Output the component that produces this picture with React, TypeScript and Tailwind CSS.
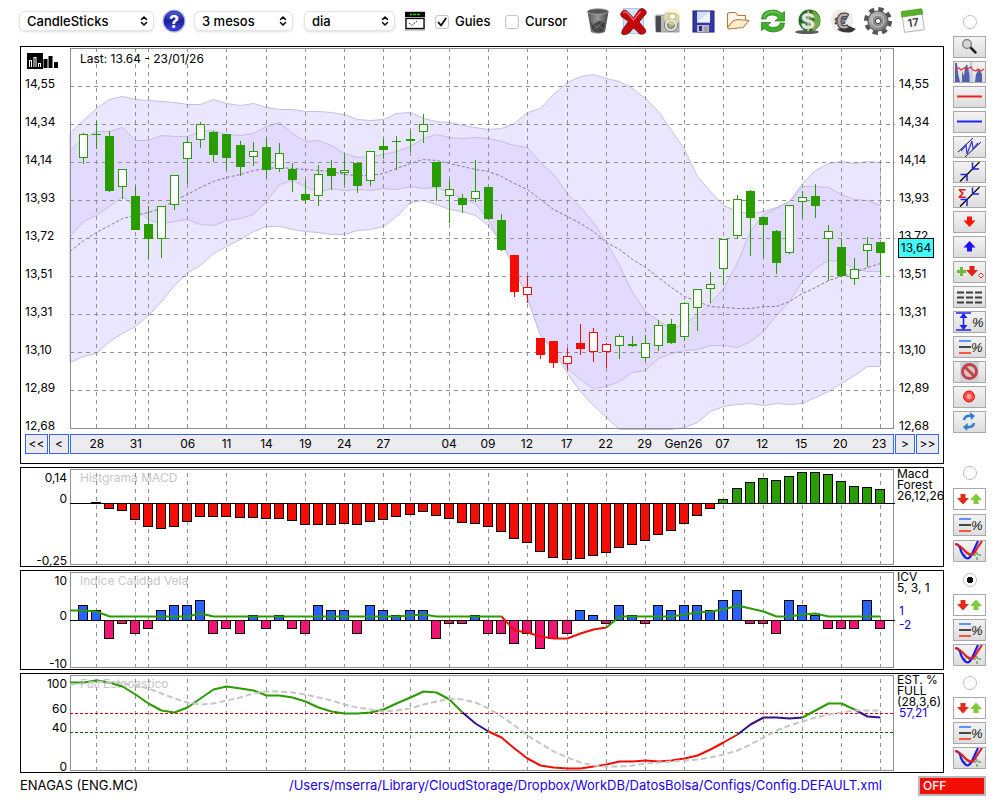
import { useState } from 'react'
import type { ReactNode } from 'react'
import { ChevronsUpDown } from 'lucide-react'

// [high, open/close top, open/close bottom, low, kind]
// u = hollow green, d = solid green, U = hollow red, D = solid red
type Candle = [number, number, number, number, 'u' | 'd' | 'U' | 'D']

const candles: Candle[] = [
  [133, 134, 157, 164, 'u'], [121, 134, 135, 149, 'd'], [131, 136, 191, 192, 'd'], [169, 169, 186, 199, 'u'],
  [186, 196, 230, 230, 'd'], [206, 224, 239, 259, 'd'], [206, 206, 238, 258, 'u'], [175, 175, 204, 210, 'u'],
  [137, 142, 158, 184, 'u'], [122, 124, 139, 148, 'u'], [131, 132, 155, 162, 'd'], [134, 134, 158, 170, 'd'],
  [141, 145, 167, 176, 'd'], [142, 151, 156, 166, 'u'], [138, 147, 170, 178, 'd'], [143, 153, 168, 172, 'u'],
  [163, 169, 180, 192, 'd'], [180, 194, 200, 204, 'd'], [165, 174, 195, 206, 'u'], [160, 168, 176, 190, 'd'],
  [154, 170, 172, 185, 'u'], [162, 163, 186, 193, 'd'], [151, 151, 180, 186, 'u'], [139, 146, 150, 159, 'd'],
  [136, 141, 142, 170, 'd'], [131, 139, 141, 152, 'd'], [114, 124, 131, 143, 'u'], [162, 162, 187, 201, 'd'],
  [180, 189, 195, 223, 'u'], [194, 198, 205, 213, 'd'], [160, 191, 198, 202, 'u'], [187, 187, 219, 220, 'd'],
  [214, 220, 250, 251, 'd'], [255, 255, 292, 297, 'D'], [276, 287, 294, 303, 'U'], [338, 338, 355, 359, 'D'],
  [341, 341, 363, 368, 'D'], [348, 356, 363, 370, 'U'], [324, 343, 349, 355, 'D'], [328, 332, 351, 362, 'U'],
  [343, 344, 351, 368, 'U'], [334, 336, 345, 359, 'u'], [336, 344, 346, 347, 'd'], [335, 343, 357, 361, 'u'],
  [320, 325, 345, 351, 'u'], [319, 324, 343, 344, 'd'], [302, 303, 336, 341, 'u'], [289, 289, 307, 331, 'u'],
  [272, 284, 288, 303, 'u'], [239, 239, 268, 285, 'u'], [195, 199, 235, 239, 'u'], [190, 191, 218, 256, 'd'],
  [217, 217, 225, 258, 'd'], [230, 231, 263, 274, 'd'], [205, 205, 252, 254, 'u'], [191, 197, 201, 218, 'u'],
  [184, 196, 206, 218, 'd'], [225, 231, 238, 281, 'u'], [239, 247, 276, 277, 'd'], [258, 269, 278, 285, 'u'],
  [237, 244, 250, 267, 'u'], [242, 242, 253, 275, 'd'],
]

// every curve starts at the left border and then has one value per session
const outerTop = [
  133, 120, 108, 99, 96, 99, 100, 101, 102, 104, 104, 99, 103, 105, 103, 107, 109, 109, 111, 111, 112, 114, 119, 120,
  119, 113, 112, 118, 121, 122, 125, 127, 129, 128, 123, 112, 108, 94, 82, 76, 74, 78, 81, 88, 98, 111, 130, 149, 176,
  191, 205, 211, 213, 211, 207, 201, 183, 170, 163, 161, 163, 161, 162,
]
const outerBottom = [
  362, 356, 353, 341, 333, 326, 315, 301, 285, 272, 265, 253, 246, 239, 231, 226, 226, 229, 231, 232, 234, 234, 230,
  229, 226, 216, 202, 200, 204, 209, 211, 215, 225, 242, 268, 298, 335, 350, 373, 391, 405, 417, 429, 429, 429, 429,
  429, 427, 422, 411, 406, 404, 403, 405, 403, 404, 403, 397, 391, 383, 375, 366, 366,
]
const innerTop = [
  150, 138, 131, 131, 127, 140, 140, 135, 136, 136, 131, 130, 134, 135, 133, 126, 122, 133, 141, 140, 145, 153, 157,
  156, 154, 151, 146, 138, 134, 137, 138, 137, 138, 141, 145, 147, 162, 174, 193, 207, 222, 242, 265, 292, 311, 320,
  329, 323, 315, 303, 288, 262, 231, 214, 208, 201, 186, 186, 187, 194, 199, 200, 205,
]
const innerBottom = [
  236, 221, 215, 206, 196, 207, 219, 223, 221, 219, 224, 225, 220, 218, 214, 201, 184, 180, 186, 192, 188, 190, 189,
  190, 188, 189, 186, 188, 187, 192, 198, 203, 220, 242, 268, 298, 335, 348, 368, 379, 388, 386, 381, 372, 370, 358,
  353, 350, 349, 345, 345, 347, 341, 331, 315, 301, 281, 268, 260, 261, 268, 271, 271,
]
const average = [
  251, 240, 232, 225, 218, 215, 212, 208, 200, 194, 187, 181, 177, 174, 170, 168, 167, 168, 169, 170, 171, 174, 175,
  175, 173, 168, 163, 159, 160, 163, 166, 169, 171, 176, 183, 189, 199, 209, 216, 223, 231, 242, 249, 259, 267, 277,
  287, 296, 301, 306, 307, 308, 308, 306, 306, 301, 293, 287, 280, 276, 272, 267, 263,
]

const macd = [
  0, 1, -5, -7, -16, -23, -25, -23, -18, -13, -13, -13, -14, -14, -15, -15, -17, -21, -21, -21, -20, -21, -18, -16, -13,
  -11, -8, -12, -15, -19, -20, -23, -28, -35, -39, -48, -54, -56, -55, -52, -49, -44, -41, -37, -31, -27, -20, -12, -5,
  4, 15, 21, 25, 23, 27, 31, 31, 29, 22, 17, 16, 14,
]

const icv = [
  3, 2, -4, -1, -3, -2, 2, 3, 3, 4, -3, -2, -3, 1, -2, 1, -2, -3, 3, 2, 2, -3, 3, 2, 1, 2, 2, -4, -1, -1, 1, -3, -3, -5,
  -3, -6, -4, -3, 2, 1, -1, 3, 1, -1, 3, 2, 3, 3, 2, 4, 6, -1, -1, -3, 4, 3, 1, -2, -2, -2, 4, -2,
]
const icvLine = [
  610, 610, 611, 616, 616, 616, 616, 616, 616, 616, 613, 616, 616, 616, 616, 616, 616, 616, 616, 616, 616, 616, 616,
  616, 616, 616, 615, 614, 616, 616, 616, 616, 616, 616, 630, 632, 636, 638, 638, 633, 629, 627, 616, 616, 616, 616,
  616, 614, 612, 611, 609, 605, 608, 611, 616, 616, 614, 613, 616, 616, 616, 616, 616,
]

const stoch = [
  682, 682, 680, 682, 686, 694, 703, 710, 712, 707, 698, 689, 686, 688, 690, 695, 695, 697, 701, 707, 711, 713, 713,
  712, 709, 703, 697, 691, 692, 699, 712, 723, 731, 737, 748, 758, 765, 767, 768, 768, 766, 764, 761, 761, 760, 761,
  760, 758, 755, 749, 742, 734, 724, 717, 717, 718, 717, 710, 703, 703, 709, 716, 717,
]
const stochSignal = [
  684, 683, 681, 682, 683, 685, 688, 693, 698, 702, 704, 703, 700, 697, 693, 691, 691, 692, 694, 697, 700, 704, 707,
  709, 711, 710, 708, 704, 701, 698, 699, 702, 708, 716, 725, 735, 743, 751, 757, 762, 765, 766, 766, 765, 763, 762,
  761, 760, 759, 757, 754, 750, 744, 737, 730, 725, 721, 717, 714, 712, 710, 710, 710,
]

const ticks: [number, string][] = [
  [1, '28'], [4, '31'], [5, ''], [8, '06'], [11, '11'], [14, '14'], [17, '19'], [20, '24'], [23, '27'], [25, ''],
  [28, '04'], [31, '09'], [34, '12'], [37, '17'], [40, '22'], [43, '29'], [46, 'Gen26'], [49, '07'], [52, '12'],
  [55, '15'], [58, '20'], [61, '23'],
]

const prices = ['14,55', '14,34', '14,14', '13,93', '13,72', '13,51', '13,31', '13,10', '12,89', '12,68']

const LEFT = 70
const WIDTH = 824
const GREEN = '#299c00'
const RED = '#f20d05'
const NAVY = '#34128a'

const sessionX = (i: number) => Math.floor(83.045 + 13.08 * i)
const curveX = (k: number) => (k === 0 ? LEFT : sessionX(k - 1) + 0.5)
const points = (values: number[], from = 0, to = values.length - 1) =>
  values.slice(from, to + 1).map((y, n) => `${curveX(from + n)},${y + 0.5}`)
const band = (top: number[], bottom: number[]) => [...points(top), ...points(bottom).reverse()].join(' ')

function Grid({ top, bottom }: { top: number; bottom: number }) {
  return (
    <g stroke="#929292" strokeDasharray="4 4">
      {ticks.map(([i]) => (
        <line key={i} x1={sessionX(i) + 0.5} x2={sessionX(i) + 0.5} y1={top} y2={bottom} />
      ))}
    </g>
  )
}

function Plot({ top, height, className, label, children }: { top: number; height: number; className: string; label: string; children: ReactNode }) {
  return (
    <svg
      role="img"
      aria-label={label}
      viewBox={`${LEFT} ${top} ${WIDTH} ${height}`}
      preserveAspectRatio="none"
      className={`block w-full overflow-visible ${className}`}
    >
      {children}
    </svg>
  )
}

function PriceChart() {
  return (
    <Plot top={47} height={387} className="h-[387px]" label="ENAGAS candlesticks">
      <polygon points={band(outerTop, outerBottom)} fill="#ebe6ff" stroke="#c5bee3" />
      <polygon points={band(innerTop, innerBottom)} fill="#e3daff" />
      <polyline points={points(innerTop).join(' ')} fill="none" stroke="#c5bee3" />
      <polyline points={points(innerBottom).join(' ')} fill="none" stroke="#c5bee3" />
      <polyline points={points(average).join(' ')} fill="none" stroke="#84799f" strokeDasharray="3 2" />
      <g stroke="#929292" strokeDasharray="4 4">
        {prices.slice(0, 9).map((p, n) => (
          <line key={p} x1={70} x2={895} y1={86.5 + n * 38} y2={86.5 + n * 38} />
        ))}
      </g>
      <Grid top={48} bottom={430} />
      <rect x={70.5} y={48.5} width={823} height={380} fill="none" stroke="#8e8e8e" />
      {candles.map(([high, top, bottom, low, kind], i) => {
        const x = sessionX(i)
        const color = kind === 'u' || kind === 'd' ? GREEN : RED
        const hollow = kind === 'u' || kind === 'U'
        return (
          <g key={i}>
            <rect x={x} y={high} width={1} height={low - high} fill={color} />
            {hollow ? (
              <rect x={x - 3.5} y={top + 0.5} width={8} height={bottom - top} fill="#fff" stroke={color} />
            ) : (
              <rect x={x - 4} y={top} width={9} height={bottom - top} fill={color} />
            )}
          </g>
        )
      })}
    </Plot>
  )
}

function MacdChart() {
  return (
    <Plot top={468} height={98} className="h-[98px]" label="Histgrama MACD">
      <rect x={70.5} y={469.5} width={823} height={95} fill="none" stroke="#8e8e8e" />
      <Grid top={473} bottom={566} />
      {macd.map((v, i) =>
        v === 0 ? null : (
          <rect
            key={i}
            x={sessionX(i) - 4.5}
            y={v > 0 ? 503.5 - v : 503.5}
            width={9}
            height={Math.abs(v)}
            fill={v > 0 ? GREEN : RED}
            stroke="#000"
          />
        ),
      )}
      <rect x={70} y={503} width={825} height={1} />
    </Plot>
  )
}

function IcvChart() {
  return (
    <Plot top={571} height={98} className="h-[98px]" label="Indice Calidad Vela">
      <rect x={70.5} y={572.5} width={823} height={95} fill="none" stroke="#8e8e8e" />
      <Grid top={576} bottom={669} />
      {icv.map((v, i) => (
        <rect
          key={i}
          x={sessionX(i) - 4.5}
          y={v > 0 ? 620.5 - v * 5 : 620.5}
          width={9}
          height={v > 0 ? v * 5 : -v * 5 - 2}
          fill={v > 0 ? '#2962ff' : '#f01475'}
          stroke="#000"
        />
      ))}
      <rect x={70} y={620} width={825} height={1} />
      <g fill="none" strokeWidth={2} strokeLinejoin="round">
        <polyline points={points(icvLine, 0, 33).join(' ')} stroke={GREEN} />
        <polyline points={points(icvLine, 33, 41).join(' ')} stroke={RED} />
        <polyline points={points(icvLine, 41).join(' ')} stroke={GREEN} />
      </g>
    </Plot>
  )
}

function StochChart() {
  return (
    <Plot top={674} height={98} className="h-[98px]" label="Full Estocastico">
      <rect x={70.5} y={675.5} width={823} height={95} fill="none" stroke="#8e8e8e" />
      <Grid top={679} bottom={772} />
      <line x1={70} x2={895} y1={713.5} y2={713.5} stroke="#d80000" strokeDasharray="3 2" />
      <line x1={70} x2={895} y1={732.5} y2={732.5} stroke="#006400" strokeDasharray="3 2" />
      <g fill="none" strokeWidth={2} strokeLinejoin="round">
        <polyline points={points(stoch, 0, 30).join(' ')} stroke={GREEN} />
        <polyline points={points(stoch, 30, 32).join(' ')} stroke={NAVY} />
        <polyline points={points(stoch, 32, 51).join(' ')} stroke={RED} />
        <polyline points={points(stoch, 51, 56).join(' ')} stroke={NAVY} />
        <polyline points={points(stoch, 56, 60).join(' ')} stroke={GREEN} />
        <polyline points={points(stoch, 60).join(' ')} stroke={NAVY} />
        <polyline points={points(stochSignal).join(' ')} stroke="#c6c6c6" strokeDasharray="6 3" />
      </g>
    </Plot>
  )
}

function Indicator({ title, axis, legend, children }: { title: string; axis: ReactNode; legend: ReactNode; children: ReactNode }) {
  return (
    <section className="flex h-[100px] border border-black">
      <div className="w-[49px] shrink-0 pt-0.5 pr-[3px] text-right leading-4">{axis}</div>
      <div className="relative min-w-0 flex-1">
        <h2 className="absolute top-0.5 left-2.5 leading-4 text-[#c6c6c6]">{title}</h2>
        <div className="relative">{children}</div>
      </div>
      <div className="w-[49px] shrink-0 overflow-hidden pl-[3px] leading-[11px] whitespace-nowrap">{legend}</div>
    </section>
  )
}

function Picker({ label, options, className }: { label: string; options: string[]; className: string }) {
  return (
    <div className={`relative shrink-0 ${className}`}>
      <select
        aria-label={label}
        className="h-5 w-full appearance-none rounded-md border border-[#e3e3e3] bg-white pl-[7px] text-[13px] leading-4 font-medium shadow-sm"
      >
        {options.map((o) => (
          <option key={o}>{o}</option>
        ))}
      </select>
      <ChevronsUpDown className="pointer-events-none absolute top-1 right-1 size-3" strokeWidth={3} />
    </div>
  )
}

function Tick({ label, on, className }: { label: string; on: boolean; className: string }) {
  const [checked, setChecked] = useState(on)
  return (
    <label className={`flex shrink-0 items-center gap-1.5 pt-0.5 text-[13px] font-medium ${className}`}>
      <span className="relative flex">
        <input
          type="checkbox"
          checked={checked}
          onChange={(e) => setChecked(e.target.checked)}
          className="size-3.5 appearance-none rounded-[3px] border border-[#c4c4c4] bg-white"
        />
        {checked && (
          <svg viewBox="0 0 14 14" className="pointer-events-none absolute inset-0 size-3.5">
            <path d="M3.500 7.500 6 10.500 10.800 3.500" fill="none" stroke="#111" strokeWidth="1.900" strokeLinecap="round" strokeLinejoin="round" />
          </svg>
        )}
      </span>
      {label}
    </label>
  )
}

const toolbarIcons: { name: string; art: ReactNode }[] = [
  {
    name: 'Paperera',
    art: (
      <>
        <path d="M3.500 4.500 7 25q7 3.500 14 0L24.500 4.500z" fill="url(#bin)" />
        <path d="M6 14 9 24q5 3 10 .5l2-8q-5-5-9-1t-6-1.500z" fill="#222" opacity=".65" />
        <path d="M8 17l5 3 6-5M10 22l5-3 4 3" fill="none" stroke="#777" strokeWidth=".8" />
        <ellipse cx="14" cy="4.500" rx="10.500" ry="2.800" fill="#555" stroke="#aaa" strokeWidth=".8" />
      </>
    ),
  },
  {
    name: 'Esborrar',
    art: (
      <>
        <rect x="4.500" y="1.500" width="20" height="25" fill="#cfe2fb" stroke="#a9c8f0" />
        <path d="M2 6q3-5 7-1l5.500 6L20 3q3-3 6 0t-1 6l-5 6 6 7q2 4-2 5t-5-2l-4.500-4L10 26q-4 3-7 1-1-2 1-5l5.500-7.500L3 10q-2-2-1-4z" fill="#c4090c" stroke="#7d0305" strokeWidth=".8" />
        <path d="M4.500 6q2-2.500 4.500.5l5.500 6.500L21.500 4.500" fill="none" stroke="#ef6a66" strokeWidth="1.400" />
      </>
    ),
  },
  {
    name: 'Captura',
    art: (
      <>
        <path d="M1 10q0-2 3-2h6l2-2h8q2 0 3 2 2 0 2 2v15H2z" fill="#b9b9b9" stroke="#8c8c8c" strokeWidth=".8" />
        <rect x="2" y="9" width="5" height="16" rx="1" fill="#4a4a4a" />
        <circle cx="17" cy="18" r="6.500" fill="#e7e7dc" stroke="#777" />
        <circle cx="17" cy="18" r="3.500" fill="#a9ab8e" stroke="#666" />
        <rect x="15" y="7" width="7" height="5" fill="#eee" stroke="#555" strokeWidth=".8" />
        <circle cx="18.500" cy="9.500" r="8.500" fill="#fbf6ae" opacity=".55" />
        <path d="M18.500 7v5M16 9.500h5" stroke="#fff" strokeWidth="1.500" />
      </>
    ),
  },
  {
    name: 'Desar',
    art: (
      <>
        <rect x="4" y="4" width="21" height="21" fill="#3537a8" stroke="#191c78" />
        <rect x="8" y="4.500" width="13" height="11" fill="#cfe0fa" />
        <path d="M8 15.500 21 4.500v11z" fill="#fff" opacity=".65" />
        <rect x="8" y="18" width="12" height="7" fill="#bcbcc6" />
        <rect x="10" y="19" width="3" height="5" fill="#2b2d92" />
        <path d="M16 19v6M18 19v6" stroke="#888" />
      </>
    ),
  },
  {
    name: 'Obrir',
    art: (
      <g fill="#fffaf0" stroke="#b07b3a" strokeWidth="1.100" strokeLinejoin="round">
        <path d="M3.500 20.500v-14l3-1h5l2.500 3h7.500v5" />
        <path d="M3.500 20.500 9.500 13.500l4-1 11.500 1L19 20.500 4.500 22z" fill="#ffeccb" />
      </g>
    ),
  },
  {
    name: 'Actualitzar',
    art: (
      <g fill="#3fae2c" stroke="#1f7d17" strokeWidth=".7" strokeLinejoin="round">
        <path d="M2.500 12q0-8.500 11.500-9 6 .2 8.500 3.500l3-2V14h-9.500l3.500-3q-2-3-6-3-6 .3-6.500 4z" />
        <path d="M25.500 16q0 8.500-11.500 9-6-.2-8.500-3.500l-3 2V15.500H12L8.500 18q2 2.500 6 2.500 6-.5 6.500-4.500z" />
        <path d="M5 10q2-5 9-5.300 5 0 7.500 3.300" fill="none" stroke="#a4e68f" />
      </g>
    ),
  },
  {
    name: 'Dolar',
    art: (
      <>
        <ellipse cx="13" cy="25" rx="12" ry="2" fill="#333" opacity=".8" />
        <circle cx="15.500" cy="13.500" r="11" fill="#2a6b18" />
        <path d="M18 3q9 4 8 13-2 7-8 8 5-10 0-21z" fill="#6cae4b" />
        <text x="14" y="22" fontSize="22" fontWeight="800" textAnchor="middle" fill="#e4e8df" stroke="#a5b09e" strokeWidth=".6">$</text>
      </>
    ),
  },
  {
    name: 'Euro',
    art: (
      <>
        <circle cx="13" cy="14" r="11.500" fill="#efecec" />
        <path d="M8 22q6 5 15 3l4-3-7-3z" fill="#3d3535" />
        <text x="13" y="22" fontSize="22" fontWeight="800" textAnchor="middle" fill="#b4aeb0" stroke="#3d383a" strokeWidth="1">€</text>
      </>
    ),
  },
  {
    name: 'Configuracio',
    art: (
      <>
        <circle cx="14" cy="14" r="11.500" fill="none" stroke="#545454" strokeWidth="5" strokeDasharray="5.030 4" />
        <circle cx="14" cy="14" r="10" fill="url(#steel)" stroke="#5c5c5c" strokeWidth="1.200" />
        <circle cx="14" cy="14" r="6" fill="#8b8b8b" stroke="#d0d0d0" />
        <circle cx="14" cy="14" r="2.600" fill="#fff" stroke="#444" />
      </>
    ),
  },
  {
    name: 'Calendari',
    art: (
      <g transform="rotate(-8 14 14)">
        <rect x="4" y="4" width="20" height="20" rx="1" fill="#fafafa" stroke="#b3b3b3" />
        <path d="M3.500 8.500V4q0-1 1-1h19q1 0 1 1v4.500z" fill="#55b32b" stroke="#3f8f1d" strokeWidth=".6" />
        <text x="14" y="19.500" fontSize="11" fontWeight="600" textAnchor="middle" fill="#3a3a3a">17</text>
      </g>
    ),
  },
]

function Percent({ x }: { x: number }) {
  return (
    <text x={x} y="16" fontSize="13" fill="#111" className="font-['Liberation_Sans',sans-serif] italic">
      %
    </text>
  )
}

const downArrow = 'M-2.500 -5h5v4h3.500L0 5.500-6 -1h3.500z'
const upArrow = 'M-2.500 5h5v-4h3.500L0 -5.500-6 1h3.500z'

const linesPercent = (
  <>
    <path d="M6 5h12" stroke="#3070ff" strokeWidth="1.500" />
    <path d="M6 11h12" stroke="#111" strokeWidth="1.500" />
    <path d="M6 17h12" stroke="#ff5340" strokeWidth="2" />
    <Percent x={18} />
  </>
)

const arrowPair = (
  <>
    <path transform="translate(10 11)" d={downArrow} fill="#e02b1d" />
    <path transform="translate(23 11)" d={upArrow} fill="#80c93c" />
  </>
)

const crossing = (
  <>
    <path d="M10 15h20M24 12v9" stroke="#2f8a2f" strokeDasharray="3 2" />
    <path d="M3 4q4 1 5 7 6 13 11 3L25 1" fill="none" stroke="#1c1cf0" strokeWidth="2.200" />
    <path d="M2 4q5 1 9 6 8 9 12 0L29 1" fill="none" stroke="#e02020" strokeWidth="2.200" />
  </>
)

const trend = (
  <>
    <path d="M7 20.500 26.500 1" stroke="#000" strokeWidth="1.200" />
    <path d="M7.500 13.500H14V20M26 8h-6.500V1.500" fill="none" stroke="#2222e0" strokeWidth="1.500" />
  </>
)

const sideTools: { name: string; art: ReactNode }[] = [
  {
    name: 'Zoom',
    art: (
      <>
        <path d="m17.500 11.500 5 5" stroke="#222" strokeWidth="2.500" strokeLinecap="round" />
        <circle cx="14" cy="8" r="4.300" fill="#d8d8d8" stroke="#777" strokeWidth="1.300" />
      </>
    ),
  },
  {
    name: 'Volum',
    art: (
      <>
        <path d="M2 21V2h2l1 10 2 9h2V10l2 5 1-9 2-3 3 12 2 6h3l1-8 3-5 3 5v8z" fill="#5560a8" />
        <path d="M18 1v20" stroke="#c9cdeb" strokeWidth="3" />
        <path d="M2 8l4-1 2 2 3-2 3 1 4-2 2 3 3 1 2-2 3 2 3-2" fill="none" stroke="#e03030" strokeWidth="1.200" />
      </>
    ),
  },
  { name: 'Linia vermella', art: <path d="M4 10.500h25" stroke="#e8262a" strokeWidth="2" /> },
  { name: 'Linia blava', art: <path d="M4 10.500h25" stroke="#2020ff" strokeWidth="2" /> },
  {
    name: 'Canal',
    art: (
      <>
        <path d="M5 16 20 2M12 21 28 6" stroke="#222" />
        <path d="m8 15 5-6 1 9 5-13 1 8 5-6" fill="none" stroke="#3535e8" strokeWidth="1.200" />
      </>
    ),
  },
  { name: 'Tendencia', art: trend },
  {
    name: 'Tendencia sumatori',
    art: (
      <>
        {trend}
        <text x="5" y="12" fontSize="12" fontWeight="700" fill="#e02020">Σ</text>
      </>
    ),
  },
  { name: 'Baixa', art: <path transform="translate(16.500 10.500)" d={downArrow} fill="#fa1408" /> },
  { name: 'Puja', art: <path transform="translate(16.500 10.500)" d={upArrow} fill="#1c10fa" /> },
  {
    name: 'Afegir senyal',
    art: (
      <>
        <path d="M8.500 6v9M4 10.500h9" stroke="#6cba3a" strokeWidth="3" />
        <path transform="translate(19 10)" d={downArrow} fill="#dd2518" />
        <path d="m28 12 2.500 2.500L28 17l-2.500-2.500z" fill="#fff" stroke="#e02020" />
      </>
    ),
  },
  { name: 'Linies', art: <path d="M4 6.500h25M4 11.500h25M4 16.500h25" stroke="#3c3c3c" strokeWidth="2" strokeDasharray="7 2" /> },
  {
    name: 'Distancia percentual',
    art: (
      <>
        <path d="M3 2h15M3 19h15M10.500 3v15" stroke="#1f1ff0" strokeWidth="1.500" />
        <path d="m10.500 2 4 5h-8zM10.500 19l4-5h-8z" fill="#1f1ff0" />
        <Percent x={19} />
      </>
    ),
  },
  { name: 'Nivells percentuals', art: linesPercent },
  {
    name: 'Desactivar',
    art: (
      <>
        <rect x="7" y="1" width="19" height="20" fill="#cfd3e0" />
        <circle cx="16.500" cy="10.500" r="7" fill="#d9c5cb" stroke="#c04545" strokeWidth="3" />
        <path d="m12 6 9 9" stroke="#c04545" strokeWidth="3" />
      </>
    ),
  },
  {
    name: 'Gravar',
    art: (
      <>
        <circle cx="16" cy="10.500" r="5.500" fill="#ff4747" stroke="#e01212" />
        <circle cx="16" cy="10.500" r="2.500" fill="#ffa3a3" />
      </>
    ),
  },
  {
    name: 'Recarregar',
    art: (
      <g fill="none" stroke="#2f7fd0" strokeWidth="2.500">
        <path d="M11 9q1-5 8-4M21 12q-1 5-8 4" />
        <path d="m17 1 5 4-4 4zM15 12l-5 4 4 4z" fill="#2f7fd0" stroke="none" />
      </g>
    ),
  },
]

const panelTools = [
  { name: 'Ordre', art: arrowPair, white: true },
  { name: 'Nivells', art: linesPercent, white: false },
  { name: 'Creuament', art: crossing, white: false },
]

function ToolButton({ name, art, white }: { name: string; art: ReactNode; white?: boolean }) {
  return (
    <button
      type="button"
      aria-label={name}
      className={`block h-[22px] w-[33px] shrink-0 border border-[#a8a8a8] ${white ? 'bg-white' : 'bg-linear-to-b from-[#f3f3f3] to-[#dddddd]'}`}
    >
      <svg viewBox="1 1 31 20" className="block h-5 w-[31px]">{art}</svg>
    </button>
  )
}

function PanelRadio({ label, checked }: { label: string; checked?: boolean }) {
  return (
    <input
      type="radio"
      name="panel"
      aria-label={label}
      defaultChecked={checked}
      className="block size-3.5 shrink-0 appearance-none rounded-full border border-[#bdbdbd] bg-white bg-[radial-gradient(circle,#111_3px,transparent_3px)] bg-size-[0_0] bg-center bg-no-repeat checked:bg-size-[100%_100%]"
    />
  )
}

function PanelTools({ label, checked, className }: { label: string; checked?: boolean; className: string }) {
  return (
    <div className={`flex flex-col items-center ${className}`}>
      <div className="pb-1">
        <PanelRadio label={label} checked={checked} />
      </div>
      {panelTools.map((t) => (
        <ToolButton key={t.name} {...t} />
      ))}
    </div>
  )
}

const navButton = 'h-5 shrink-0 border border-[#3366ff] bg-[#ebebf0] text-center leading-4'

export default function App() {
  return (
    <main className="bg-white font-['Inter','Liberation_Sans',sans-serif] text-xs text-black">
      <div className="flex">
        <div className="min-w-0 flex-1">
          <header className="mb-1 flex h-[42px] items-center pl-[19px]">
            <Picker label="Tipus" options={['CandleSticks', 'Linies', 'Barres']} className="w-[135px]" />
            <button type="button" aria-label="Ajuda" className="mx-2 shrink-0">
              <svg viewBox="0 0 24 24" className="size-6">
                <circle cx="12" cy="12" r="11.500" fill="#a9aff0" />
                <circle cx="12" cy="12" r="9.800" fill="url(#help)" stroke="#2026a0" />
                <text x="12" y="18.500" fontSize="18" fontWeight="700" textAnchor="middle" fill="#fff">?</text>
              </svg>
            </button>
            <Picker label="Periode" options={['3 mesos', '6 mesos', '1 any']} className="w-[99px]" />
            <Picker label="Interval" options={['dia', 'setmana', 'mes']} className="ml-[11px] w-[91px]" />
            <button type="button" aria-label="Plantilla" className="mx-2.5 shrink-0">
              <svg viewBox="0 0 20 20" className="size-5">
                <rect width="20" height="20" fill="#c9c9c9" />
                <rect y="1" width="20" height="5" />
                <path d="M5 3.500h2m1 0h3m1 0h3" stroke="#2fd012" strokeWidth="1.500" />
                <rect x="1" y="7.500" width="18" height="10" fill="#fff" stroke="#000" strokeWidth="1.300" />
                <path d="m4 12 2.500 2.500L12 10" fill="none" stroke="#2424f0" strokeDasharray="2 1" />
              </svg>
            </button>
            <Tick label="Guies" on className="w-[70px]" />
            <Tick label="Cursor" on={false} className="mr-[9px] w-[70px]" />
            <div className="flex gap-[7px]">
              {toolbarIcons.map((icon) => (
                <button key={icon.name} type="button" aria-label={icon.name} className="size-7 shrink-0">
                  <svg viewBox="0 0 28 28" className="size-7">
                    <defs>
                      <linearGradient id="bin">
                        <stop offset="0" stopColor="#555" />
                        <stop offset=".5" stopColor="#999" />
                        <stop offset="1" stopColor="#444" />
                      </linearGradient>
                      <linearGradient id="steel" x2="1" y2="1">
                        <stop offset="0" stopColor="#c9c9c9" />
                        <stop offset="1" stopColor="#6a6a6a" />
                      </linearGradient>
                      <linearGradient id="help" x2="0" y2="1">
                        <stop offset="0" stopColor="#5561d8" />
                        <stop offset=".5" stopColor="#1d1f95" />
                        <stop offset="1" stopColor="#3b46ef" />
                      </linearGradient>
                    </defs>
                    {icon.art}
                  </svg>
                </button>
              ))}
            </div>
          </header>

          <div className="flex flex-col gap-[3px] pl-5">
            <section className="border border-black pb-[9px]">
              <div className="flex">
                <div className="w-[49px] shrink-0 pt-1.5 pl-1">
                  <button type="button" aria-label="Tipus de grafic" className="mb-[7px] ml-0.5 block">
                    <svg viewBox="0 0 32 16" className="h-4 w-8">
                      <rect width="16" height="16" />
                      <path d="M3.500 14V7M8 14V4M12.500 14v-4" stroke="#fff" strokeWidth="3" />
                      <path d="M3.500 14V8M8 14V5M12.500 14v-3" stroke="#000" />
                      <path d="M18.500 15V6M23.500 15V3M29 15V9" stroke="#000" strokeWidth="4" />
                    </svg>
                  </button>
                  <div className="flex flex-col gap-[22px] leading-4">
                    {prices.map((p) => (
                      <span key={p}>{p}</span>
                    ))}
                  </div>
                </div>
                <div className="relative min-w-0 flex-1">
                  <PriceChart />
                  <p className="absolute top-1 left-2.5 leading-4">Last: 13.64 - 23/01/26</p>
                </div>
                <div className="relative w-[49px] shrink-0 pt-[29px] pl-[5px]">
                  <div className="flex flex-col gap-[22px] leading-4">
                    {prices.map((p) => (
                      <span key={p}>{p}</span>
                    ))}
                  </div>
                  <span className="absolute top-[191px] left-1 h-5 w-9 border border-black bg-[#40ffff] text-center leading-[18px]">
                    13,64
                  </span>
                </div>
              </div>
              <nav className="flex gap-px px-1">
                <button type="button" className={`${navButton} w-[23px]`}>&lt;&lt;</button>
                <button type="button" className={`${navButton} w-5`}>&lt;</button>
                <div className="relative h-5 min-w-0 flex-1 border border-[#3366ff] bg-[#ebebf0] leading-[18px]">
                  {ticks.map(([i, label]) => (
                    <span
                      key={i}
                      className="absolute -translate-x-1/2"
                      style={{ left: `${((sessionX(i) - LEFT) / WIDTH) * 100}%` }}
                    >
                      {label}
                    </span>
                  ))}
                </div>
                <button type="button" className={`${navButton} w-5`}>&gt;</button>
                <button type="button" className={`${navButton} w-[23px]`}>&gt;&gt;</button>
              </nav>
            </section>

            <Indicator
              title="Histgrama MACD"
              axis={
                <>
                  <p>0,14</p>
                  <p className="mt-[5px]">0</p>
                  <p className="mt-[46px]">-0,25</p>
                </>
              }
              legend={
                <>
                  <p>Macd</p>
                  <p>Forest</p>
                  <p>26,12,26</p>
                </>
              }
            >
              <MacdChart />
            </Indicator>

            <Indicator
              title="Indice Calidad Vela"
              axis={
                <>
                  <p>10</p>
                  <p className="mt-[19px]">0</p>
                  <p className="mt-8">-10</p>
                </>
              }
              legend={
                <>
                  <p>ICV</p>
                  <p>5, 3, 1</p>
                  <p className="mt-3 pl-0.5 text-[#1a00e6]">1</p>
                  <p className="mt-[3px] pl-0.5 text-[#1a00e6]">-2</p>
                </>
              }
            >
              <IcvChart />
            </Indicator>

            <Indicator
              title="Full Estocastico"
              axis={
                <>
                  <p>100</p>
                  <p className="mt-[9px]">60</p>
                  <p className="mt-[3px]">40</p>
                  <p className="mt-[23px]">0</p>
                </>
              }
              legend={
                <>
                  <p>EST. %</p>
                  <p>FULL</p>
                  <p>(28,3,6)</p>
                  <p className="pl-0.5 text-[#1a00e6]">57,21</p>
                </>
              }
            >
              <StochChart />
            </Indicator>
          </div>
        </div>

        <aside className="mr-3.5 ml-[9px] w-[33px] shrink-0">
          <div className="flex h-[466px] flex-col items-center gap-[3px] pt-[15px]">
            <div className="pb-1">
              <PanelRadio label="Preus" />
            </div>
            {sideTools.map((t) => (
              <ToolButton key={t.name} {...t} />
            ))}
          </div>
          <PanelTools label="MACD" className="h-[107px] gap-1" />
          <PanelTools label="ICV" checked className="h-[103px] gap-[3px]" />
          <PanelTools label="Estocastico" className="gap-[3px]" />
        </aside>
      </div>

      <footer className="flex items-center pt-[3px] pr-3.5 pl-5 text-[13px]">
        <span>ENAGAS (ENG.MC)</span>
        <a href="#config" className="mr-9 ml-auto text-[#1a00e6]">
          /Users/mserra/Library/CloudStorage/Dropbox/WorkDB/DatosBolsa/Configs/Config.DEFAULT.xml
        </a>
        <button type="button" className="h-5 w-[68px] border-2 border-[#b9b9b9] bg-[#f20d05] pl-[3px] text-left text-xs leading-4 font-medium text-white">
          OFF
        </button>
      </footer>
    </main>
  )
}
